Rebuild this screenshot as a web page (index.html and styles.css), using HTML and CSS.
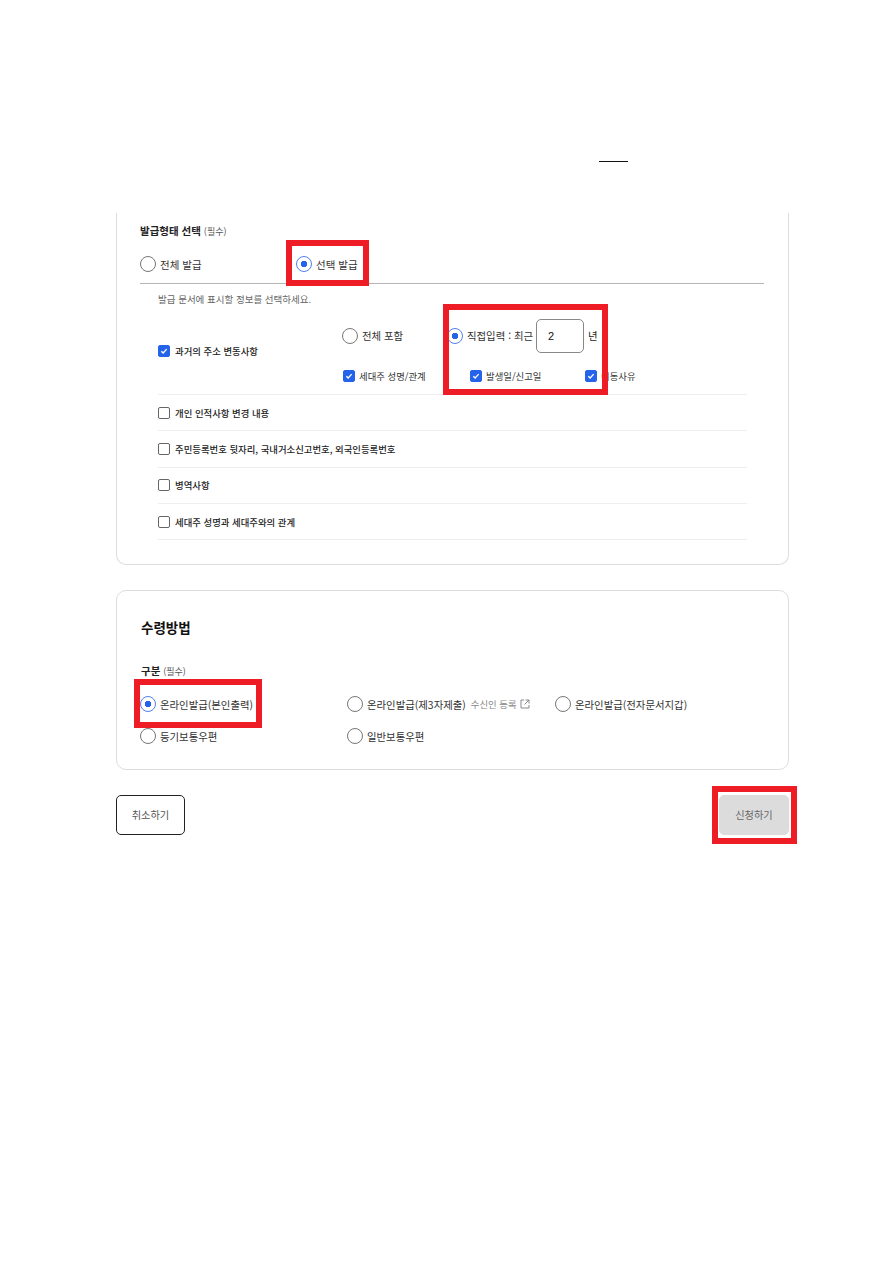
FILE: index.html
```html
<!DOCTYPE html>
<html lang="ko">

<head>
    <meta charset="UTF-8">
    <meta name="viewport" content="width=device-width, initial-scale=1.0">
    <title>발급 신청</title>
    <link rel="stylesheet" href="styles.css">
</head>

<body>
    <div class="page">
        <section class="card card-top">
            <h3 class="field-title">발급형태 선택 <small>(필수)</small></h3>
            <div class="issue-type">
                <label class="opt"><span class="radio"></span>전체 발급</label>
                <label class="opt"><span class="radio on"></span>선택 발급</label>
            </div>
            <p class="hint">발급 문서에 표시할 정보를 선택하세요.</p>
            <ul class="info-list">
                <li class="info-row info-row-main">
                    <label class="opt strong"><span class="check on"><svg viewBox="0 0 12 12"><path d="M2.8 6.2 5 8.4 9.2 3.8"/></svg></span>과거의 주소 변동사항</label>
                    <div class="detail">
                        <div class="detail-line">
                            <label class="opt opt-all"><span class="radio"></span>전체 포함</label>
                            <label class="opt"><span class="radio on"></span>직접입력 : 최근</label>
                            <span class="year-box">2</span>
                            <span class="year-unit">년</span>
                        </div>
                        <div class="detail-line detail-checks">
                            <label class="opt opt-a"><span class="check on"><svg viewBox="0 0 12 12"><path d="M2.8 6.2 5 8.4 9.2 3.8"/></svg></span>세대주 성명/관계</label>
                            <label class="opt opt-b"><span class="check on"><svg viewBox="0 0 12 12"><path d="M2.8 6.2 5 8.4 9.2 3.8"/></svg></span>발생일/신고일</label>
                            <label class="opt"><span class="check on"><svg viewBox="0 0 12 12"><path d="M2.8 6.2 5 8.4 9.2 3.8"/></svg></span>이동사유</label>
                        </div>
                    </div>
                </li>
                <li class="info-row"><label class="opt strong"><span class="check"></span>개인 인적사항 변경 내용</label></li>
                <li class="info-row"><label class="opt strong"><span class="check"></span>주민등록번호 뒷자리, 국내거소신고번호, 외국인등록번호</label></li>
                <li class="info-row"><label class="opt strong"><span class="check"></span>병역사항</label></li>
                <li class="info-row"><label class="opt strong"><span class="check"></span>세대주 성명과 세대주와의 관계</label></li>
            </ul>
        </section>

        <section class="card card-receive">
            <h2 class="card-title">수령방법</h2>
            <h3 class="field-title">구분 <small>(필수)</small></h3>
            <div class="receive-grid">
                <label class="opt"><span class="radio on"></span>온라인발급(본인출력)</label>
                <label class="opt"><span class="radio"></span>온라인발급(제3자제출)<a class="reg-link">수신인 등록<svg viewBox="0 0 10 10"><path d="M4 1H1v8h8V6M5.5 1H9v3.5M9 1 4.5 5.5"/></svg></a></label>
                <label class="opt"><span class="radio"></span>온라인발급(전자문서지갑)</label>
                <label class="opt"><span class="radio"></span>등기보통우편</label>
                <label class="opt"><span class="radio"></span>일반보통우편</label>
            </div>
        </section>

        <div class="actions">
            <button class="btn">취소하기</button>
            <button class="btn btn-off">신청하기</button>
        </div>
    </div>

    <!-- 문서에 표시된 강조 표시 -->
    <div class="stray-line"></div>
    <div class="mark mark-type"></div>
    <div class="mark mark-year"></div>
    <div class="mark mark-online"></div>
    <div class="mark mark-submit"></div>
</body>

</html>
```

FILE: styles.css
```css
* {
    box-sizing: border-box;
}

body {
    margin: 0;
    background: #ffffff;
    color: #222222;
    font-family: "Noto Sans CJK KR", "Noto Sans", sans-serif;
    font-size: 10px;
    position: relative;
    min-height: 1262px;
}

.page {
    width: 673px;
    margin-left: 116px;
    padding-top: 213px;
}

.card {
    border: 1px solid #dddddd;
    border-radius: 10px;
    padding: 0 24px 0 23px;
}

.card-top {
    height: 352px;
    border-top: none;
    border-radius: 0 0 10px 10px;
    padding-top: 10px;
}

.card-receive {
    height: 180px;
    margin-top: 25px;
    padding-top: 25px;
}

.card-receive .field-title,
.card-title {
    padding-left: 1px;
}

.card-title {
    margin: 0 0 25px;
    font-size: 13.5px;
    line-height: 22px;
    font-weight: 700;
    color: #111111;
}

.field-title {
    margin: 0;
    font-size: 10.5px;
    line-height: 16px;
    font-weight: 700;
}

.field-title small {
    font-size: 9px;
    font-weight: 400;
    color: #555555;
}

.opt {
    display: inline-flex;
    align-items: center;
    white-space: nowrap;
    color: #333333;
}

.strong {
    font-size: 9.4px;
    font-weight: 500;
    color: #222222;
}

.radio {
    flex: none;
    width: 16px;
    height: 16px;
    margin-right: 4px;
    border: 1px solid #777777;
    border-radius: 50%;
    background: #ffffff;
}

.radio.on {
    border-color: #4f82e6;
    background: radial-gradient(circle, #2563eb 0, #2563eb 3px, #ffffff 3.5px);
}

.check {
    flex: none;
    width: 12px;
    height: 12px;
    margin-right: 5px;
    border: 1px solid #666666;
    border-radius: 2px;
    background: #ffffff;
}

.check.on {
    border-color: #2563eb;
    background: #2563eb;
}

.check svg {
    display: block;
    width: 10px;
    height: 10px;
    fill: none;
    stroke: #ffffff;
    stroke-width: 1.6;
}

.issue-type {
    display: flex;
    align-items: center;
    height: 34px;
    margin-top: 10px;
    padding-bottom: 5px;
    border-bottom: 1px solid #b5b5b5;
    font-size: 10.5px;
}

.issue-type .opt {
    width: 156px;
}

.hint {
    margin: 0;
    padding: 9px 0 0 18px;
    font-size: 9.5px;
    line-height: 13px;
    color: #666666;
}

.info-list {
    list-style: none;
    margin: 0 0 0 18px;
    padding: 0;
    width: 589px;
}

.info-row {
    display: flex;
    align-items: center;
    height: 36.3px;
    border-bottom: 1px solid #eeeeee;
}

.info-row-main {
    height: 83px;
    margin-top: 6px;
}

.info-row-main > .opt {
    width: 184px;
    margin-bottom: 4px;
}

.detail {
    display: flex;
    flex-direction: column;
    font-size: 10.4px;
}

.detail-line {
    display: flex;
    align-items: center;
    height: 34px;
}

.detail-checks {
    height: 24px;
    margin-top: 11px;
    margin-left: 1px;
    font-size: 9.4px;
}

.detail-checks .check {
    margin-right: 4px;
}

.opt-all {
    width: 105px;
}

.opt-a {
    width: 127px;
}

.opt-b {
    width: 115px;
}

.year-box {
    width: 48px;
    height: 34px;
    margin-left: 3px;
    padding-left: 11px;
    border: 1px solid #888888;
    border-radius: 5px;
    font-family: "Liberation Sans", sans-serif;
    font-size: 11px;
    line-height: 32px;
    color: #111111;
}

.year-unit {
    margin-left: 4px;
}

.receive-grid {
    display: grid;
    grid-template-columns: 207px 208px auto;
    grid-auto-rows: 32px;
    align-items: center;
    margin-top: 8px;
    font-size: 10.4px;
}

.reg-link {
    display: inline-flex;
    align-items: center;
    margin-left: 5px;
    font-size: 9.4px;
    color: #888888;
}

.reg-link svg {
    width: 10px;
    height: 10px;
    margin-left: 3px;
    fill: none;
    stroke: #888888;
    stroke-width: 1;
}

.actions {
    display: flex;
    justify-content: space-between;
    margin-top: 25px;
}

.btn {
    width: 69px;
    height: 40px;
    padding: 0 0 2px;
    border: 1px solid #222222;
    border-radius: 5px;
    background: #ffffff;
    color: #555555;
    font-family: inherit;
    font-size: 10.2px;
}

.btn-off {
    width: 70px;
    border-color: #dcdcdc;
    background: #dcdcdc;
    color: #666666;
}

.stray-line {
    position: absolute;
    left: 599px;
    top: 161px;
    width: 29px;
    height: 1px;
    background: #111111;
}

.mark {
    position: absolute;
    border: 6px solid #ee1c25;
}

.mark-type {
    left: 286px;
    top: 240px;
    width: 83px;
    height: 46px;
}

.mark-year {
    left: 443px;
    top: 304px;
    width: 165px;
    height: 91px;
}

.mark-online {
    left: 134px;
    top: 679px;
    width: 128px;
    height: 49px;
}

.mark-submit {
    left: 712px;
    top: 786px;
    width: 85px;
    height: 58px;
}
```
